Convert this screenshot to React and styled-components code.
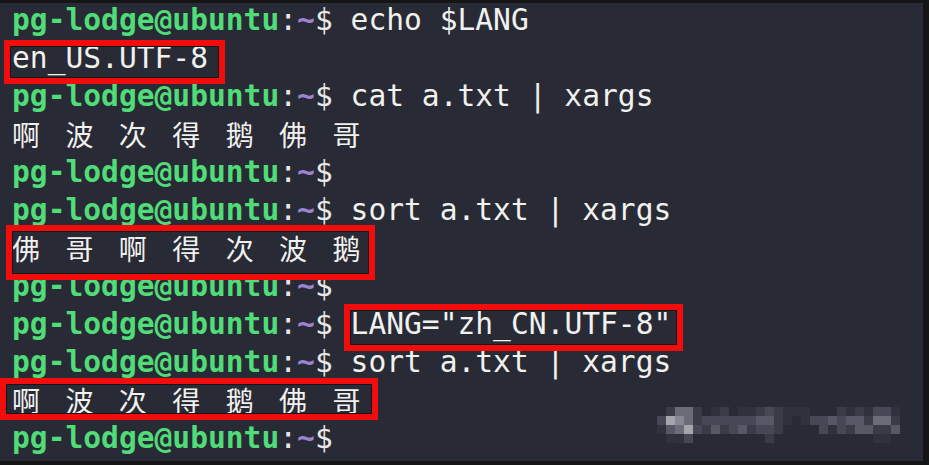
import React from "react";
import styled, { createGlobalStyle } from "styled-components";

const CELL = 17.8;
const LINE = 38;
const TEXT_LH = 35;

const GlobalStyle = createGlobalStyle`
  html, body { margin: 0; padding: 0; background: #151515; }
  #root { width: 929px; height: 465px; }
`;

const Frame = styled.div`
  width: 929px;
  height: 465px;
  box-sizing: border-box;
  padding: 3px 6px 4px 0;
  background: #151515;
  display: flex;
`;

const Terminal = styled.div`
  position: relative;
  flex: 1;
  background: #282a36;
  padding: 0 0 0 12px;
  display: flex;
  flex-direction: column;
  overflow: hidden;
  font-family: "DejaVu Sans Mono", "Liberation Mono", "Noto Sans CJK SC", monospace;
  font-size: 29.6px;
  color: #f1f1ee;
`;

const Line = styled.div`
  box-sizing: border-box;
  height: ${LINE}px;
  padding-bottom: ${LINE - TEXT_LH}px;
  line-height: ${TEXT_LH}px;
  white-space: pre;
`;

const User = styled.span`
  color: #50dc76;
  font-weight: bold;
`;

const Colon = styled.span`
  color: #e8e8e4;
`;

const Tilde = styled.span`
  color: #9c84cf;
  font-weight: bold;
`;

const Wide = styled.span`
  display: inline-block;
  width: ${CELL * 2}px;
  font-family: "Noto Sans CJK SC", sans-serif;
  font-size: 28px;
  text-align: left;
  line-height: ${TEXT_LH}px;
  vertical-align: top;
`;

const Highlight = styled.span`
  position: relative;
  display: inline-block;
  height: ${TEXT_LH}px;
  vertical-align: top;
  &::after {
    content: "";
    position: absolute;
    top: ${(p) => p.$t}px;
    right: ${(p) => p.$r}px;
    bottom: ${(p) => p.$b}px;
    left: ${(p) => p.$l}px;
    border: 6px solid #f20d0d;
    box-shadow: inset 0 0 0 1px #14141a;
    pointer-events: none;
  }
`;

const Watermark = styled.svg`
  position: absolute;
  left: 657px;
  top: 404px;
`;

const isCjk = (c) => /[\u3400-\u9fff]/.test(c);

function Text({ children }) {
  return (
    <>
      {Array.from(children).map((c, i) =>
        isCjk(c) ? <Wide key={i}>{c}</Wide> : <React.Fragment key={i}>{c}</React.Fragment>
      )}
    </>
  );
}

function Prompt({ cmd }) {
  return (
    <>
      <User>pg-lodge@ubuntu</User>
      <Colon>:</Colon>
      <Tilde>~</Tilde>
      <Colon>$</Colon>
      {cmd ? " " + cmd : ""}
    </>
  );
}

const palette = ["", "#2f313d", "#393b47", "#464855", "#565865", "#6a6c78", "#868894", "#a4a6ae"];
const rows = [
  "025520120112321110002121331211",
  "376523333334421013343442552000",
  "145732423423320000313244224100",
  "011300000000200000000000110000",
];

function PixelMark() {
  const cells = [];
  rows.forEach((row, r) => {
    Array.from(row.slice(0, 27)).forEach((v, k) => {
      const n = Number(v);
      if (n > 0) {
        cells.push(
          <rect key={`${r}-${k}`} x={k * 9} y={r * 9} width={9} height={9} fill={palette[n]} />
        );
      }
    });
  });
  return (
    <Watermark width={243} height={36} viewBox="0 0 243 36">
      {cells}
    </Watermark>
  );
}

export default function App() {
  return (
    <>
      <GlobalStyle />
      <Frame>
        <Terminal>
          <Line><Prompt cmd="echo $LANG" /></Line>
          <Line>
            <Highlight $t={-1} $r={-17} $b={-8} $l={-8}>en_US.UTF-8</Highlight>
          </Line>
          <Line><Prompt cmd="cat a.txt | xargs" /></Line>
          <Line><Text>啊 波 次 得 鹅 佛 哥</Text></Line>
          <Line><Prompt /></Line>
          <Line><Prompt cmd="sort a.txt | xargs" /></Line>
          <Line>
            <Highlight $t={-6} $r={-7} $b={-14} $l={-6}>
              <Text>佛 哥 啊 得 次 波 鹅</Text>
            </Highlight>
          </Line>
          <Line><Prompt /></Line>
          <Line>
            <Prompt />
            {" "}
            <Highlight $t={-3} $r={-12} $b={-9} $l={-7}>LANG="zh_CN.UTF-8"</Highlight>
          </Line>
          <Line><Prompt cmd="sort a.txt | xargs" /></Line>
          <Line>
            <Highlight $t={-5} $r={-10} $b={-2} $l={-12}>
              <Text>啊 波 次 得 鹅 佛 哥</Text>
            </Highlight>
          </Line>
          <Line><Prompt /></Line>
          <PixelMark />
        </Terminal>
      </Frame>
    </>
  );
}
